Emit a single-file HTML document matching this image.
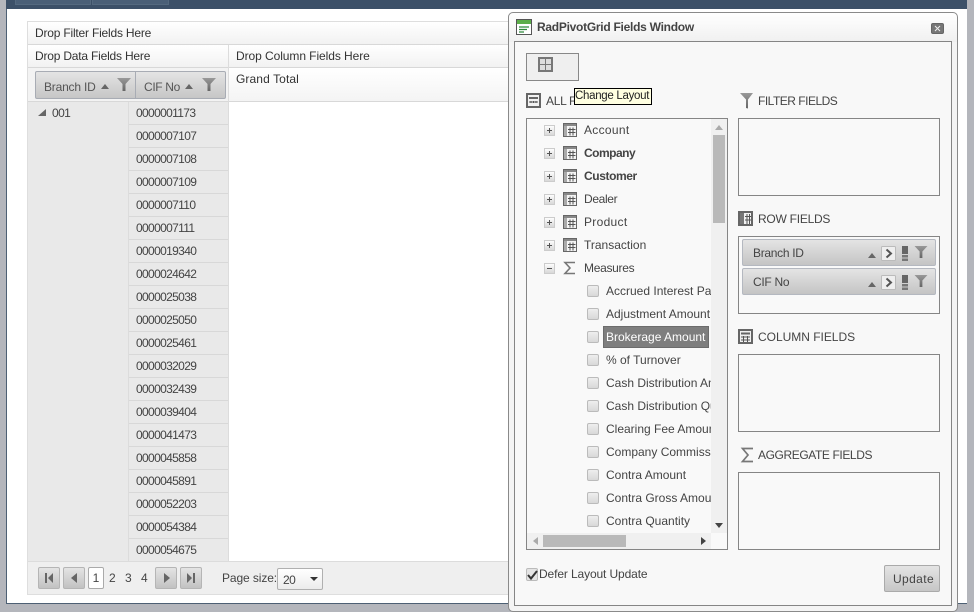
<!DOCTYPE html>
<html><head><meta charset="utf-8"><title>RadPivotGrid</title>
<style>
html,body{margin:0;padding:0;width:974px;height:612px;overflow:hidden;background:#b4b6bc}
*{box-sizing:border-box}
body{position:relative;font:12px/16px "Liberation Sans",sans-serif;color:#333;letter-spacing:-.1px}
.a,.t{position:absolute}
.t{white-space:nowrap}
svg{position:absolute;display:block;overflow:visible}
.row{position:absolute;left:129px;width:99px;height:23px;background:#e9e9e9;border-bottom:1px solid #d8d8d8;padding:3px 0 0 7px;letter-spacing:-.65px;color:#444}
.tr{position:absolute;white-space:nowrap;color:#444;letter-spacing:0}
.cb{position:absolute;left:587px;width:12px;height:12px;border:1px solid #bbb;border-radius:2px;background:linear-gradient(#eee,#d8d8d8)}
.pl{position:absolute;left:544px;width:11px;height:11px;border:1px solid #ccc;background:linear-gradient(#fdfdfd,#d8d8d8)}
.pl:before{content:"";position:absolute;left:2px;top:4px;width:5px;height:1px;background:#555}
.pl.p:after{content:"";position:absolute;left:4px;top:2px;width:1px;height:5px;background:#555}
.box{position:absolute;left:738px;width:202px;height:78px;border:1px solid #858585;background:#f9f9f9}
.hd{position:absolute;left:758px;color:#444;font-size:12px;white-space:nowrap}
.pbtn{position:absolute;top:567px;width:22px;height:22px;border:1px solid #b5b5b5;border-radius:2px;background:linear-gradient(#e4e4e4,#c2c2c2)}
.chip{position:absolute;left:742px;width:194px;height:27px;border:1px solid #b4b8c0;border-radius:2px;background:linear-gradient(#e4e4e4,#c4c4c4);color:#444;padding:5px 0 0 10px;letter-spacing:-.3px}
.hc{position:absolute;top:71px;height:28px;border:1px solid #a8acb4;background:linear-gradient(#e4e4e4,#c6c6c6)}
.g{border-bottom:1px solid #d8d8d8}
</style></head>
<body>
<svg width="0" height="0" style="position:absolute"><defs>
<linearGradient id="fg" x1="0" y1="0" x2="0" y2="1"><stop offset="0" stop-color="#999"/><stop offset="1" stop-color="#666"/></linearGradient>
<symbol id="fn" viewBox="0 0 14 13"><path d="M0 0H14L8.500 6V13H5.500V6Z" fill="url(#fg)"/></symbol>
<symbol id="tb" viewBox="0 0 14 14"><rect x=".5" y=".5" width="13" height="13" fill="#f4f4f4" stroke="#666"/><rect x="1" y="1" width="12" height="2" fill="#888"/><rect x="1" y="3" width="3" height="10" fill="#aaa"/><path d="M5 6.500H12.500M5 9.500H12.500M7 4.500V12.500M10 4.500V12.500" stroke="#555" fill="none"/></symbol>
</defs></svg>

<!-- page frame -->
<div class="a" style="left:0;top:0;width:974px;height:9px;background:#3c5068"></div>
<div class="a" style="left:0;top:0;width:6px;height:612px;background:#b4b6bc"></div>
<div class="a" style="left:6px;top:9px;width:961px;height:595px;background:#fff;border-left:1px solid #4d6074;border-bottom:1px solid #4d6074"></div>
<div class="a" style="left:967px;top:0;width:7px;height:612px;background:#b4b6bc"></div>
<div class="a" style="left:15px;top:0;width:76px;height:5px;background:#4a5f77;border:1px solid #54697f;border-top:0"></div>
<div class="a" style="left:92px;top:0;width:77px;height:5px;background:#4a5f77;border:1px solid #54697f;border-top:0"></div>

<!-- grid -->
<div class="a" style="left:27px;top:21px;width:490px;height:574px;border:1px solid #dedede;background:#fff"></div>
<div class="a g" style="left:28px;top:22px;width:489px;height:23px;background:linear-gradient(#fff,#f2f2f2)"></div>
<div class="a g" style="left:28px;top:45px;width:489px;height:23px;background:linear-gradient(#fff,#f2f2f2)"></div>
<div class="a g" style="left:28px;top:68px;width:200px;height:34px;background:#f3f3f3"></div>
<div class="a" style="left:228px;top:45px;width:1px;height:517px;background:#dcdcdc"></div>
<div class="a g" style="left:229px;top:68px;width:288px;height:34px;background:linear-gradient(#fff,#f4f4f4)"></div>
<div class="t" style="left:35px;top:25px;letter-spacing:-.2px">Drop Filter Fields Here</div>
<div class="t" style="left:35px;top:48px;letter-spacing:-.2px">Drop Data Fields Here</div>
<div class="t" style="left:236px;top:48px;letter-spacing:-.07px">Drop Column Fields Here</div>
<div class="t" style="left:236px;top:71px;letter-spacing:.1px">Grand Total</div>

<div class="hc" style="left:35px;width:101px;border-radius:2px 0 0 2px"></div>
<div class="hc" style="left:135px;width:91px;border-radius:0 2px 2px 0"></div>
<div class="t" style="left:44px;top:79px;color:#555;letter-spacing:-.2px">Branch ID</div>
<div class="t" style="left:144px;top:79px;color:#555;letter-spacing:-.35px">CIF No</div>
<svg style="left:101px;top:84px" width="8" height="5"><path d="M0 5L4 0L8 5Z" fill="#666"/></svg>
<svg style="left:185px;top:84px" width="8" height="5"><path d="M0 5L4 0L8 5Z" fill="#666"/></svg>
<svg style="left:117px;top:78px" width="14" height="13"><use href="#fn"/></svg>
<svg style="left:202px;top:78px" width="14" height="13"><use href="#fn"/></svg>

<div class="a" style="left:28px;top:102px;width:100px;height:460px;background:#e9e9e9"></div>
<div class="a" style="left:128px;top:102px;width:1px;height:460px;background:#dcdcdc"></div>
<svg style="left:38px;top:109px" width="8" height="8"><path d="M8 0V7H0Z" fill="#666"/></svg>
<div class="t" style="left:52px;top:105px;color:#444;letter-spacing:-.6px">001</div>

<div class="row" style="top:102px">0000001173</div>
<div class="row" style="top:125px">0000007107</div>
<div class="row" style="top:148px">0000007108</div>
<div class="row" style="top:171px">0000007109</div>
<div class="row" style="top:194px">0000007110</div>
<div class="row" style="top:217px">0000007111</div>
<div class="row" style="top:240px">0000019340</div>
<div class="row" style="top:263px">0000024642</div>
<div class="row" style="top:286px">0000025038</div>
<div class="row" style="top:309px">0000025050</div>
<div class="row" style="top:332px">0000025461</div>
<div class="row" style="top:355px">0000032029</div>
<div class="row" style="top:378px">0000032439</div>
<div class="row" style="top:401px">0000039404</div>
<div class="row" style="top:424px">0000041473</div>
<div class="row" style="top:447px">0000045858</div>
<div class="row" style="top:470px">0000045891</div>
<div class="row" style="top:493px">0000052203</div>
<div class="row" style="top:516px">0000054384</div>
<div class="row" style="top:539px;height:23px;border-bottom:0">0000054675</div>

<!-- pager -->
<div class="a" style="left:28px;top:561px;width:489px;height:33px;background:#efefef;border-top:1px solid #dcdcdc"></div>
<div class="pbtn" style="left:38px"><svg style="left:6px;top:5px" width="9" height="10"><path d="M0 0H2V10H0ZM8 0V10L3 5Z" fill="#666"/></svg></div>
<div class="pbtn" style="left:63px"><svg style="left:7px;top:5px" width="6" height="10"><path d="M6 0V10L0 5Z" fill="#666"/></svg></div>
<div class="a" style="left:88px;top:567px;width:16px;height:22px;border:1px solid #aaa;border-radius:2px;background:#fff;text-align:center;padding-top:2px;color:#444;letter-spacing:0">1</div>
<div class="t" style="left:109px;top:570px;color:#444">2</div>
<div class="t" style="left:125px;top:570px;color:#444">3</div>
<div class="t" style="left:141px;top:570px;color:#444">4</div>
<div class="pbtn" style="left:155px"><svg style="left:8px;top:5px" width="6" height="10"><path d="M0 0V10L6 5Z" fill="#666"/></svg></div>
<div class="pbtn" style="left:180px"><svg style="left:6px;top:5px" width="9" height="10"><path d="M0 0V10L5 5ZM6 0H8V10H6Z" fill="#666"/></svg></div>
<div class="t" style="left:222px;top:570px;color:#444;letter-spacing:-.1px">Page size:</div>
<div class="a" style="left:277px;top:568px;width:46px;height:22px;border:1px solid #b0b0b0;border-radius:2px;background:linear-gradient(#fff,#ececec);padding:3px 0 0 5px;color:#444;letter-spacing:-.5px">20</div>
<svg style="left:310px;top:577px" width="8" height="4"><path d="M0 0H8L4 4Z" fill="#333"/></svg>

<!-- window -->
<div class="a" style="left:508px;top:12px;width:450px;height:600px;border:1px solid #8a8a8a;border-radius:5px;background:linear-gradient(#fff 0,#f0f0f0 29px,#f4f4f4 29px)"></div>
<div class="a" style="left:514px;top:41px;width:438px;height:565px;border:1px solid #858585;background:#f8f8f8"></div>
<svg style="left:516px;top:19px" width="16" height="16"><rect x=".5" y=".5" width="15" height="15" fill="#fff" stroke="#555"/><rect x="1" y="1" width="14" height="4" fill="#5cae4a"/><path d="M3 8H13M3 10.500H11M3 13H8" stroke="#2f8a3a" stroke-width="1.200"/></svg>
<div class="t" style="left:537px;top:19px;font-weight:bold;color:#444;font-size:12px;letter-spacing:-.27px">RadPivotGrid Fields Window</div>
<div class="a" style="left:931px;top:23px;width:13px;height:11px;border-radius:2px;background:#777;border:1px solid #666"></div>
<svg style="left:934px;top:25px" width="7" height="7"><path d="M1 1L6 6M6 1L1 6" stroke="#eee"/></svg>

<div class="a" style="left:526px;top:53px;width:53px;height:28px;border:1px solid #888;background:#efefef"></div>
<svg style="left:538px;top:57px" width="15" height="15"><rect width="15" height="15" fill="#777"/><rect x="2" y="2" width="5" height="5" fill="#ddd"/><rect x="8" y="2" width="5" height="5" fill="#ddd"/><rect x="2" y="8" width="5" height="5" fill="#ddd"/><rect x="8" y="8" width="5" height="5" fill="#ddd"/></svg>

<svg style="left:526px;top:93px" width="15" height="15"><rect x="1" y="1" width="13" height="13" fill="#f2f2f2" stroke="#666" stroke-width="2"/><path d="M3 5H12" stroke="#666" stroke-width="2"/><path d="M3 9H12M5 8V10M7.500 8V10M10 8V10" stroke="#555"/></svg>
<div class="hd" style="left:546px;top:93px;letter-spacing:-.3px">ALL FIELDS</div>
<div class="t" style="left:574px;top:88px;width:78px;height:17px;border:1px solid #000;background:#ffffe1;color:#222;font-size:11.500px;line-height:14px;letter-spacing:-.3px;padding-left:0">Change Layout</div>

<!-- tree -->
<div class="a" style="left:526px;top:118px;width:202px;height:432px;border:1px solid #858585;background:#f9f9f9"></div>
<div class="a" style="left:711px;top:119px;width:16px;height:414px;background:#f0f0f0"></div>
<div class="a" style="left:713px;top:135px;width:12px;height:88px;background:#b9b9b9"></div>
<svg style="left:715px;top:125px" width="8" height="5"><path d="M0 5L4 0L8 5Z" fill="#aaa"/></svg>
<svg style="left:715px;top:523px" width="8" height="5"><path d="M0 0H8L4 5Z" fill="#444"/></svg>
<div class="a" style="left:527px;top:533px;width:184px;height:16px;background:#f0f0f0"></div>
<div class="a" style="left:543px;top:535px;width:83px;height:12px;background:#b9b9b9"></div>
<svg style="left:533px;top:537px" width="5" height="8"><path d="M5 0V8L0 4Z" fill="#aaa"/></svg>
<svg style="left:701px;top:537px" width="5" height="8"><path d="M0 0V8L5 4Z" fill="#444"/></svg>

<div class="pl p" style="top:125px"></div><svg style="left:563px;top:123px" width="14" height="14"><use href="#tb"/></svg><div class="tr" style="left:584px;top:122px;letter-spacing:.3px">Account</div>
<div class="pl p" style="top:148px"></div><svg style="left:563px;top:146px" width="14" height="14"><use href="#tb"/></svg><div class="tr" style="left:584px;top:145px;font-weight:bold;letter-spacing:-.5px">Company</div>
<div class="pl p" style="top:171px"></div><svg style="left:563px;top:169px" width="14" height="14"><use href="#tb"/></svg><div class="tr" style="left:584px;top:168px;font-weight:bold;letter-spacing:-.4px">Customer</div>
<div class="pl p" style="top:194px"></div><svg style="left:563px;top:192px" width="14" height="14"><use href="#tb"/></svg><div class="tr" style="left:584px;top:191px;letter-spacing:-.35px">Dealer</div>
<div class="pl p" style="top:217px"></div><svg style="left:563px;top:215px" width="14" height="14"><use href="#tb"/></svg><div class="tr" style="left:584px;top:214px;letter-spacing:.3px">Product</div>
<div class="pl p" style="top:240px"></div><svg style="left:563px;top:238px" width="14" height="14"><use href="#tb"/></svg><div class="tr" style="left:584px;top:237px;letter-spacing:0">Transaction</div>
<div class="pl" style="top:263px"></div><svg style="left:563px;top:261px" width="13" height="14"><path d="M12 1.500H2L7 7L2 12.500H12" fill="none" stroke="#777" stroke-width="1.600"/></svg><div class="tr" style="left:584px;top:260px;letter-spacing:-.3px">Measures</div>

<div class="a" style="left:603px;top:326px;width:106px;height:22px;background:#7e7e7e;border:1px solid #6c6c6c"></div>
<div style="position:absolute;left:606px;top:283px;width:105px;height:245px;overflow:hidden">
<div class="tr" style="left:0;top:0">Accrued Interest Paid</div>
<div class="tr" style="left:0;top:23px">Adjustment Amount</div>
<div class="tr" style="left:0;top:46px;color:#fff">Brokerage Amount</div>
<div class="tr" style="left:0;top:69px">% of Turnover</div>
<div class="tr" style="left:0;top:92px">Cash Distribution Amount</div>
<div class="tr" style="left:0;top:115px">Cash Distribution Quantity</div>
<div class="tr" style="left:0;top:138px">Clearing Fee Amount</div>
<div class="tr" style="left:0;top:161px">Company Commission</div>
<div class="tr" style="left:0;top:184px">Contra Amount</div>
<div class="tr" style="left:0;top:207px">Contra Gross Amount</div>
<div class="tr" style="left:0;top:230px">Contra Quantity</div>
</div>
<div class="cb" style="top:285px"></div>
<div class="cb" style="top:308px"></div>
<div class="cb" style="top:331px"></div>
<div class="cb" style="top:354px"></div>
<div class="cb" style="top:377px"></div>
<div class="cb" style="top:400px"></div>
<div class="cb" style="top:423px"></div>
<div class="cb" style="top:446px"></div>
<div class="cb" style="top:469px"></div>
<div class="cb" style="top:492px"></div>
<div class="cb" style="top:515px"></div>

<!-- right column -->
<svg style="left:740px;top:93px" width="13" height="16"><path d="M0 0H13L8 6.500V15.500L6 15V6.500Z" fill="url(#fg)"/></svg>
<div class="hd" style="top:93px;letter-spacing:-.5px">FILTER FIELDS</div>
<div class="box" style="top:118px"></div>

<svg style="left:738px;top:211px" width="15" height="15"><rect x="1" y="1" width="13" height="13" fill="#f2f2f2" stroke="#666" stroke-width="2"/><rect x="2" y="2" width="4" height="11" fill="#777"/><path d="M7 5.500H13M7 9H13M9 3V13M11.500 3V13" stroke="#555"/></svg>
<div class="hd" style="top:211px;letter-spacing:-.25px">ROW FIELDS</div>
<div class="box" style="top:236px"></div>
<div class="chip" style="top:239px">Branch ID</div>
<div class="chip" style="top:268px">CIF No</div>

<svg style="left:868px;top:253px" width="8" height="5"><path d="M0 5L4 0L8 5Z" fill="#666"/></svg>
<svg style="left:881px;top:246px" width="15" height="15"><rect x=".5" y=".5" width="14" height="14" rx="1" fill="#efefef" stroke="#bbb"/><path d="M5.500 3.500L10 7.500L5.500 11.500" fill="none" stroke="#555" stroke-width="2"/></svg>
<svg style="left:902px;top:246px" width="6" height="15"><path d="M0 0H6V8H0Z" fill="#666"/><path d="M0 9H6V11.500H0ZM0 12.500H6V15H0Z" fill="#777"/></svg>
<svg style="left:914px;top:246px" width="14" height="12"><use href="#fn"/></svg>

<svg style="left:868px;top:282px" width="8" height="5"><path d="M0 5L4 0L8 5Z" fill="#666"/></svg>
<svg style="left:881px;top:275px" width="15" height="15"><rect x=".5" y=".5" width="14" height="14" rx="1" fill="#efefef" stroke="#bbb"/><path d="M5.500 3.500L10 7.500L5.500 11.500" fill="none" stroke="#555" stroke-width="2"/></svg>
<svg style="left:902px;top:275px" width="6" height="15"><path d="M0 0H6V8H0Z" fill="#666"/><path d="M0 9H6V11.500H0ZM0 12.500H6V15H0Z" fill="#777"/></svg>
<svg style="left:914px;top:275px" width="14" height="12"><use href="#fn"/></svg>

<svg style="left:738px;top:329px" width="15" height="15"><rect x="1" y="1" width="13" height="13" fill="#f2f2f2" stroke="#666" stroke-width="2"/><path d="M3 4.500H12" stroke="#666" stroke-width="2"/><path d="M3 8H12M3 11H12M5.500 7V13M9.500 7V13" stroke="#555"/></svg>
<div class="hd" style="top:329px;letter-spacing:-.02px">COLUMN FIELDS</div>
<div class="box" style="top:354px"></div>

<svg style="left:741px;top:447px" width="13" height="16"><path d="M12 1.500H1.500L7 8L1.500 14.500H12" fill="none" stroke="#777" stroke-width="1.700"/></svg>
<div class="hd" style="top:447px;letter-spacing:-.4px">AGGREGATE FIELDS</div>
<div class="box" style="top:472px"></div>

<div class="a" style="left:526px;top:568px;width:12px;height:13px;border:1px solid #bbb;border-radius:2px;background:#e4e4e4"></div>
<svg style="left:527px;top:570px" width="11" height="10"><path d="M1 5L4 8.500L10 1" fill="none" stroke="#333" stroke-width="2"/></svg>
<div class="t" style="left:539px;top:566px;color:#444;letter-spacing:-.12px">Defer Layout Update</div>
<div class="a" style="left:884px;top:565px;width:56px;height:27px;border:1px solid #aaa;border-radius:2px;background:linear-gradient(#e4e4e4,#c6c6c6);text-align:center;padding:5px 0 0 3px;color:#444;letter-spacing:.4px">Update</div>
</body></html>
